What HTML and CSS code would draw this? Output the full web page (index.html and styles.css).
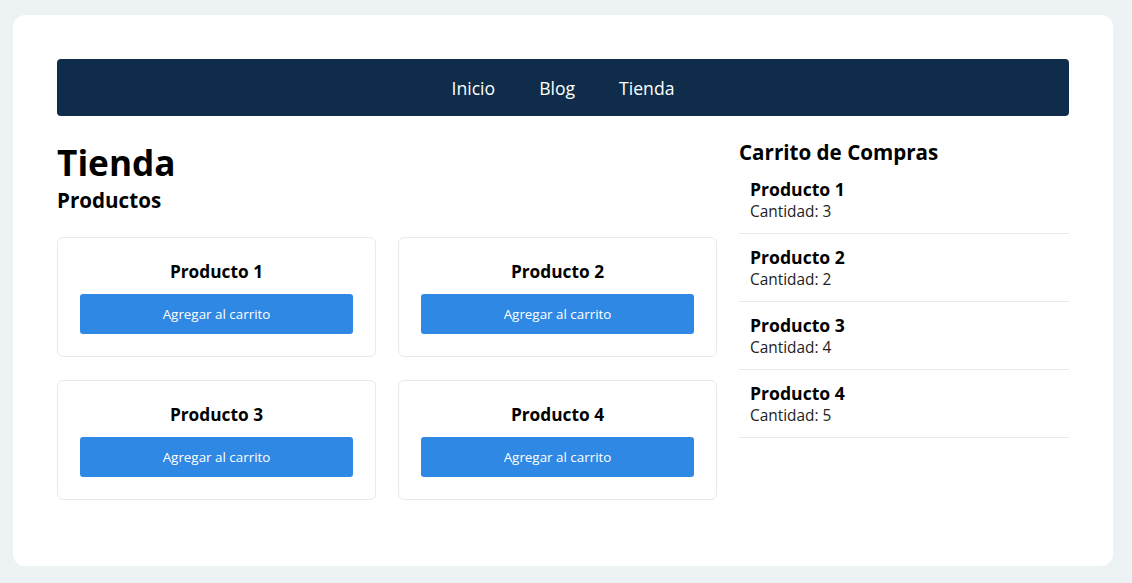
FILE: index.html
```html
<!DOCTYPE html>
<html lang="es">
<head>
<meta charset="utf-8">
<title>Tienda</title>
<link rel="stylesheet" href="styles.css">
</head>
<body>
<div class="page">
  <nav class="nav">
    <a href="#">Inicio</a>
    <a href="#">Blog</a>
    <a href="#">Tienda</a>
  </nav>
  <div class="layout">
    <main class="main">
      <h1 class="title">Tienda</h1>
      <h2 class="subtitle">Productos</h2>
      <div class="grid">
        <div class="product"><h3>Producto 1</h3><button class="btn">Agregar al carrito</button></div>
        <div class="product"><h3>Producto 2</h3><button class="btn">Agregar al carrito</button></div>
        <div class="product"><h3>Producto 3</h3><button class="btn">Agregar al carrito</button></div>
        <div class="product"><h3>Producto 4</h3><button class="btn">Agregar al carrito</button></div>
      </div>
    </main>
    <aside class="cart">
      <h2 class="cart-title">Carrito de Compras</h2>
      <ul class="cart-list">
        <li class="cart-item"><div class="cart-name">Producto 1</div><div class="cart-qty">Cantidad: 3</div></li>
        <li class="cart-item"><div class="cart-name">Producto 2</div><div class="cart-qty">Cantidad: 2</div></li>
        <li class="cart-item"><div class="cart-name">Producto 3</div><div class="cart-qty">Cantidad: 4</div></li>
        <li class="cart-item"><div class="cart-name">Producto 4</div><div class="cart-qty">Cantidad: 5</div></li>
      </ul>
    </aside>
  </div>
</div>
</body>
</html>
```

FILE: styles.css
```css
* { box-sizing: border-box; }
html, body { margin: 0; }
body {
  background: #edf2f5;
  font-family: "Open Sans", sans-serif;
  color: #000;
  padding: 15px 19px 17px 13px;
}
.page {
  background: #fff;
  border-radius: 12px;
  padding: 44px 44px 66px 44px;
  height: 551px;
}
.nav {
  background: #0f2d4a;
  border-radius: 4px;
  height: 57px;
  display: flex;
  justify-content: center;
  align-items: center;
  gap: 44px;
}
.nav a {
  color: #fff;
  text-decoration: none;
  font-size: 17.6px;
}
.layout {
  display: grid;
  grid-template-columns: 2fr 1fr;
  gap: 22px;
  margin-top: 22px;
}
.title {
  margin: 0;
  font-size: 35.2px;
  font-weight: 700;
  line-height: normal;
}
.subtitle {
  margin: 0 0 23px;
  font-size: 20.6px;
  font-weight: 700;
  line-height: normal;
}
.grid {
  display: grid;
  grid-template-columns: 1fr 1fr;
  gap: 23px 22px;
}
.product {
  border: 1px solid #e9e9ef;
  border-radius: 6px;
  padding: 22px;
  text-align: center;
}
.product h3 {
  margin: 0 0 10px;
  font-size: 17.3px;
  font-weight: 700;
  line-height: 24px;
}
.btn {
  display: block;
  width: 100%;
  height: 40px;
  background: #3088e5;
  color: #fff;
  border: 0;
  border-radius: 3px;
  font-family: "Open Sans", sans-serif;
  font-size: 13.4px;
}
.cart-title {
  margin: 0;
  font-size: 20.6px;
  font-weight: 700;
  line-height: 28px;
}
.cart-list {
  list-style: none;
  margin: 0;
  padding: 0;
}
.cart-item {
  padding: 11px;
  border-bottom: 1px solid #e9e9ef;
}
.cart-name {
  font-size: 17.6px;
  font-weight: 700;
  line-height: 24px;
}
.cart-qty {
  font-size: 15.4px;
  line-height: 21px;
  color: #222;
}
```
